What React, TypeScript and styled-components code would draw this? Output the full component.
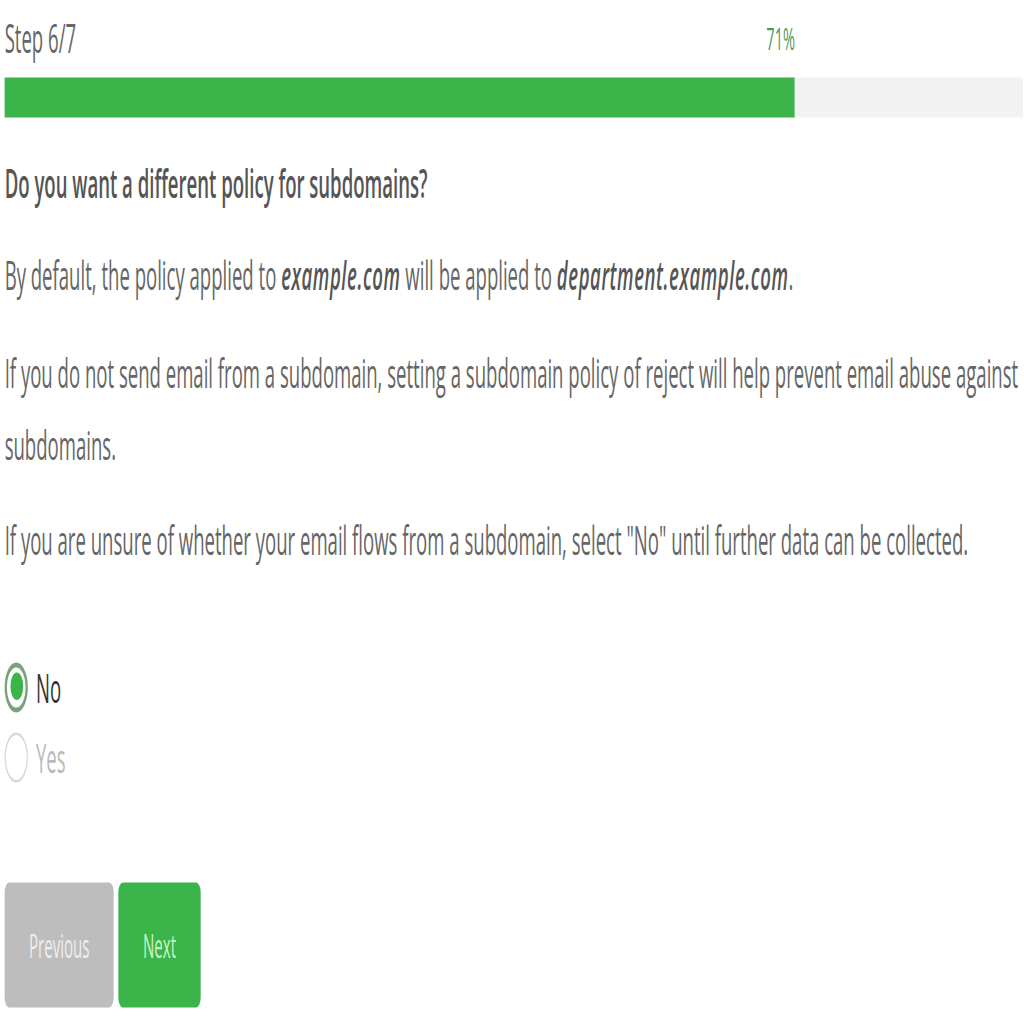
import styled, { createGlobalStyle } from "styled-components";

const GlobalStyle = createGlobalStyle`
  html {
    overflow: hidden;
  }
  body {
    margin: 0;
    padding: 0;
    min-height: 1024px;
    background: #ffffff;
  }
`;

// the screenshot is a wide page squeezed into a square, so the whole page is scaled
const Stage = styled.div`
  box-sizing: border-box;
  width: 882px;
  padding-left: 4px;
  transform: scale(1.16, 2.5);
  transform-origin: 0 0;
  font-family: "Open Sans", "Liberation Sans", sans-serif;
  font-size: 16px;
  color: #666666;
`;

const Content = styled.div`
  display: flex;
  flex-direction: column;
`;

const ProgressHeader = styled.div<{ $fill: string }>`
  display: grid;
  grid-template-columns: ${(p) => p.$fill} 1fr;
  align-items: end;
  padding-top: 3px;
  height: 24px;
`;

const StepLabel = styled.div`
  grid-area: 1 / 1;
  line-height: 24px;
  color: #666666;
`;

const Percent = styled.div`
  grid-area: 1 / 1;
  justify-self: end;
  font-size: 12.5px;
  line-height: 22px;
  color: #4f9860;
`;

const Track = styled.div`
  margin-top: 4px;
  height: 16px;
  background: #f2f2f2;
`;

const Fill = styled.div`
  height: 100%;
  background: #3bb54a;
`;

const Question = styled.h2`
  margin: 12px 0 8px;
  font-size: 16px;
  font-weight: 600;
  line-height: 29px;
  color: #555555;
`;

const Paragraph = styled.p`
  margin: 0 0 9.5px;
  line-height: 29px;
`;

const Domain = styled.em`
  font-weight: 600;
  letter-spacing: 0.5px;
  color: #555555;
`;

const Options = styled.div`
  margin-top: 20px;
  display: flex;
  flex-direction: column;
`;

const Option = styled.label<{ $checked?: boolean }>`
  display: flex;
  align-items: center;
  gap: 7px;
  height: 28px;
  color: ${(p) => (p.$checked ? "#333333" : "#bbbbbb")};
`;

const Radio = styled.span<{ $checked?: boolean }>`
  box-sizing: border-box;
  width: 20px;
  height: 20px;
  border-radius: 50%;
  border: ${(p) => (p.$checked ? "2px solid #7aa27f" : "1px solid #d6d6d6")};
  display: flex;
  align-items: center;
  justify-content: center;

  &::after {
    content: "";
    display: ${(p) => (p.$checked ? "block" : "none")};
    width: 11px;
    height: 11px;
    border-radius: 50%;
    background: #3bb54a;
  }
`;

const Actions = styled.div`
  margin-top: 36px;
  display: flex;
  gap: 4px;
`;

const Button = styled.button<{ $primary?: boolean }>`
  height: 50px;
  padding: 0 21px;
  border: none;
  border-radius: 4px;
  font-family: inherit;
  font-size: 13px;
  background: ${(p) => (p.$primary ? "#3bb54a" : "#bdbdbd")};
  color: ${(p) => (p.$primary ? "#c9f5c4" : "#eeeeee")};
`;

const progress = 71;
// the track in the screenshot runs past the right edge; this is the share that shows
const visibleShare = 0.915;
const fillWidth = `${Math.min(100, progress / visibleShare)}%`;

const App = () => {
  return (
    <>
      <GlobalStyle />
      <Stage>
        <Content>
          <ProgressHeader $fill={fillWidth}>
            <StepLabel>Step 6/7</StepLabel>
            <Percent>{progress}%</Percent>
          </ProgressHeader>
          <Track>
            <Fill style={{ width: fillWidth }} />
          </Track>
          <Question>Do you want a different policy for subdomains?</Question>
          <Paragraph>
            By default, the policy applied to <Domain>example.com</Domain> will be applied to{" "}
            <Domain>department.example.com</Domain>.
          </Paragraph>
          <Paragraph>
            If you do not send email from a subdomain, setting a subdomain policy of reject will
            help prevent email abuse against subdomains.
          </Paragraph>
          <Paragraph>
            If you are unsure of whether your email flows from a subdomain, select "No" until
            further data can be collected.
          </Paragraph>
          <Options>
            <Option $checked>
              <Radio $checked />
              No
            </Option>
            <Option>
              <Radio />
              Yes
            </Option>
          </Options>
          <Actions>
            <Button>Previous</Button>
            <Button $primary>Next</Button>
          </Actions>
        </Content>
      </Stage>
    </>
  );
};

export default App;
